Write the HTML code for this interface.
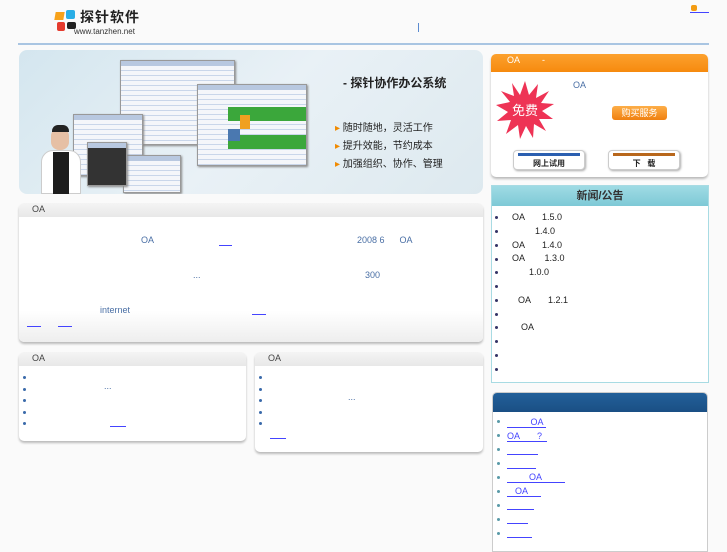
<!DOCTYPE html>
<html><head><meta charset="utf-8"><style>
*{margin:0;padding:0;box-sizing:border-box}
body{width:727px;height:545px;background:#fafafa;position:relative;overflow:hidden;font-family:"Liberation Sans","Noto Sans CJK SC",sans-serif;font-size:9px;color:#333}
.a{position:absolute}
.box{position:absolute;background:#fff;border-radius:5px;box-shadow:0 2px 2px #bbb;overflow:hidden}
.gh{height:14px;background:linear-gradient(#f4f4f4,#e8e8e8);padding:1px 0 0 13px;font-size:9px;color:#444}
.dot{position:absolute;width:3px;height:3px;border-radius:50%;background:#336}
.bl{color:#4a6fa5}
.u{position:absolute;height:1px;background:#44f}
.win{position:absolute;background:repeating-linear-gradient(#f4f6fa 0 4px,#c9d6ea 4px 5px);border:1px solid #999;box-shadow:1px 1px 2px #888}
.win:before{content:"";position:absolute;left:0;right:0;top:0;height:5px;background:#b8c8e0}
</style></head><body>
<div class="a" style="left:55px;top:10px;width:22px;height:22px">
<div class="a" style="left:0;top:2px;width:9px;height:8px;background:#f7a21b;transform:skew(-10deg)"></div>
<div class="a" style="left:11px;top:0;width:9px;height:9px;background:#29aee6;border-radius:2px"></div>
<div class="a" style="left:2px;top:12px;width:8px;height:9px;background:#e53b2e;border-radius:2px"></div>
<div class="a" style="left:12px;top:12px;width:9px;height:7px;background:#222;border-radius:2px"></div>
</div>
<div class="a" style="left:80px;top:8px;font-size:14px;font-weight:bold;color:#222;letter-spacing:1px;line-height:18px">探针软件</div>
<div class="a" style="left:74px;top:27px;font-size:8px;color:#333;line-height:9px">www.tanzhen.net</div>
<div class="a" style="left:418px;top:23px;width:1px;height:9px;background:#5b8bd0"></div>
<div class="a" style="left:691px;top:5px;width:6px;height:6px;background:#f39c12;border-radius:2px"></div>
<div class="a" style="left:690px;top:12px;width:19px;height:1px;background:#44f"></div>
<div class="a" style="left:18px;top:43px;width:691px;height:2px;background:#a9c5e2"></div>

<div class="a" style="left:19px;top:50px;width:464px;height:144px;border-radius:8px;background:linear-gradient(135deg,#d4e6ef,#e9f1f6 50%,#dde9ef);overflow:hidden">
<div class="win" style="left:101px;top:10px;width:115px;height:85px"></div>
<div class="win" style="left:54px;top:64px;width:70px;height:62px"></div>
<div class="win" style="left:178px;top:34px;width:110px;height:82px"><div class="a" style="left:30px;top:22px;width:78px;height:14px;background:#3ba73b"></div><div class="a" style="left:30px;top:50px;width:78px;height:14px;background:#3ba73b"></div><div class="a" style="left:42px;top:30px;width:10px;height:14px;background:#f0a020"></div><div class="a" style="left:30px;top:44px;width:12px;height:12px;background:#4a78b0"></div></div>
<div class="win" style="left:104px;top:105px;width:58px;height:38px"></div>
<div class="win" style="left:68px;top:92px;width:40px;height:44px;background:#333"></div>
<div class="a" style="left:32px;top:78px;width:18px;height:22px;border-radius:8px;background:#e6c0a5"></div>
<div class="a" style="left:33px;top:75px;width:17px;height:7px;border-radius:6px 6px 0 0;background:#222"></div>
<div class="a" style="left:22px;top:100px;width:40px;height:44px;border-radius:12px 12px 0 0;background:#fff;border:1px solid #ccc"></div>
<div class="a" style="left:34px;top:102px;width:16px;height:42px;background:#1c1c1c"></div>
<div class="a" style="left:324px;top:24px;font-size:12px;font-weight:bold;color:#222">- 探针协作办公系统</div>
<div class="a" style="left:316px;top:70px;font-size:10px;color:#222;line-height:18px"><span style="color:#f08a00">▸</span> 随时随地，灵活工作<br><span style="color:#f08a00">▸</span> 提升效能，节约成本<br><span style="color:#f08a00">▸</span> 加强组织、协作、管理</div>
</div>

<div class="box" style="left:491px;top:54px;width:217px;height:123px">
<div style="height:18px;background:linear-gradient(#fca12e,#f68a0e);color:#fff;font-size:9px;padding:1px 0 0 16px">OA &nbsp;&nbsp;&nbsp;&nbsp;&nbsp;&nbsp;&nbsp;&nbsp;-</div>
<div class="a bl" style="left:82px;top:26px;font-size:9px">OA</div>
<svg class="a" style="left:5px;top:27px" width="58" height="58" viewBox="0 0 58 58"><polygon fill="#ee3355" points="29,0 33,14 42,3 40,17 53,10 45,22 58,23 46,30 57,38 43,38 50,50 38,43 37,57 30,45 24,58 22,44 10,53 15,39 1,40 12,31 0,24 14,21 5,10 18,15 16,2 24,14" /><text x="29" y="34" text-anchor="middle" font-size="13" fill="#fff" font-family="Noto Sans CJK SC">免费</text></svg>
<div class="a" style="left:121px;top:52px;width:55px;height:14px;background:linear-gradient(#fdae48,#f08010);border-radius:3px;color:#fff;font-size:9px;text-align:center;line-height:14px">购买服务</div>
<div class="a" style="left:22px;top:96px;width:72px;height:20px;background:#fff;border:1px solid #ccc;border-radius:4px;box-shadow:1px 1px 2px #aaa"><div style="margin:2px 4px;height:3px;background:#2b5fb0"></div><div style="font-size:8px;font-weight:bold;text-align:center;color:#222">网上试用</div></div>
<div class="a" style="left:117px;top:96px;width:72px;height:20px;background:#fff;border:1px solid #ccc;border-radius:4px;box-shadow:1px 1px 2px #aaa"><div style="margin:2px 4px;height:3px;background:#b8671c"></div><div style="font-size:8px;font-weight:bold;text-align:center;color:#222">下 &nbsp;&nbsp;载</div></div>
</div>

<div class="a" style="left:491px;top:185px;width:218px;height:198px;background:#fff;border:1px solid #a8dbe3">
<div style="height:20px;background:linear-gradient(#9fdbe4,#7ec9d6);text-align:center;font-size:11px;font-weight:bold;color:#333;line-height:20px">新闻/公告</div>
<div style="font-size:9px;color:#222;line-height:13.8px;padding:5px 0 0 0;position:relative">
<div style="padding-left:20px">OA &nbsp;&nbsp;&nbsp;&nbsp;&nbsp;&nbsp;1.5.0</div>
<div style="padding-left:43px">1.4.0</div>
<div style="padding-left:20px">OA &nbsp;&nbsp;&nbsp;&nbsp;&nbsp;&nbsp;1.4.0</div>
<div style="padding-left:20px">OA &nbsp;&nbsp;&nbsp;&nbsp;&nbsp;&nbsp;&nbsp;1.3.0</div>
<div style="padding-left:37px">1.0.0</div>
<div>&nbsp;</div>
<div style="padding-left:26px">OA &nbsp;&nbsp;&nbsp;&nbsp;&nbsp;&nbsp;1.2.1</div>
<div>&nbsp;</div>
<div style="padding-left:29px">OA</div>
<div>&nbsp;</div><div>&nbsp;</div><div>&nbsp;</div>
</div></div>
<div class="dot" style="left:495px;top:216px"></div><div class="dot" style="left:495px;top:230px"></div><div class="dot" style="left:495px;top:244px"></div><div class="dot" style="left:495px;top:258px"></div><div class="dot" style="left:495px;top:271px"></div><div class="dot" style="left:495px;top:285px"></div><div class="dot" style="left:495px;top:299px"></div><div class="dot" style="left:495px;top:313px"></div><div class="dot" style="left:495px;top:326px"></div><div class="dot" style="left:495px;top:340px"></div><div class="dot" style="left:495px;top:354px"></div><div class="dot" style="left:495px;top:368px"></div>

<div class="a" style="left:492px;top:392px;width:216px;height:160px;background:#fff;border:1px solid #ccc;border-radius:5px 5px 0 0;overflow:hidden">
<div style="height:19px;background:linear-gradient(#23609a,#1a4f84)"></div>
<div style="position:relative;font-size:9px;color:#44f">
<div class="a" style="left:14px;top:5px;width:39px;border-bottom:1px solid #44f;text-align:right">OA&nbsp;</div>
<div class="a" style="left:14px;top:19px;width:40px;border-bottom:1px solid #44f">OA &nbsp;&nbsp;&nbsp;&nbsp;&nbsp;&nbsp;?</div>
<div class="u" style="left:14px;top:42px;width:31px"></div>
<div class="u" style="left:14px;top:56px;width:29px"></div>
<div class="a" style="left:14px;top:60px;width:58px;border-bottom:1px solid #44f;padding-left:22px">OA</div>
<div class="a" style="left:14px;top:74px;width:34px;border-bottom:1px solid #44f;padding-left:8px">OA</div>
<div class="u" style="left:14px;top:97px;width:27px"></div>
<div class="u" style="left:14px;top:111px;width:21px"></div>
<div class="u" style="left:14px;top:125px;width:25px"></div>
</div></div>
<div class="dot" style="left:497px;top:420px;background:#5a9aa8"></div><div class="dot" style="left:497px;top:434px;background:#5a9aa8"></div><div class="dot" style="left:497px;top:448px;background:#5a9aa8"></div><div class="dot" style="left:497px;top:462px;background:#5a9aa8"></div><div class="dot" style="left:497px;top:476px;background:#5a9aa8"></div><div class="dot" style="left:497px;top:490px;background:#5a9aa8"></div><div class="dot" style="left:497px;top:504px;background:#5a9aa8"></div><div class="dot" style="left:497px;top:518px;background:#5a9aa8"></div><div class="dot" style="left:497px;top:532px;background:#5a9aa8"></div>

<div class="box" style="left:19px;top:203px;width:464px;height:139px">
<div class="gh">OA</div>
<div style="height:125px;background:linear-gradient(#fff 75%,#eee)"></div>
<div class="a bl" style="left:122px;top:32px">OA</div>
<div class="u" style="left:200px;top:42px;width:13px"></div>
<div class="a bl" style="left:338px;top:32px">2008 6 &nbsp;&nbsp;&nbsp;&nbsp;&nbsp;OA</div>
<div class="a bl" style="left:174px;top:67px">...</div>
<div class="a bl" style="left:346px;top:67px">300</div>
<div class="a bl" style="left:81px;top:102px">internet</div>
<div class="u" style="left:233px;top:111px;width:14px"></div>
<div class="u" style="left:8px;top:123px;width:14px"></div>
<div class="u" style="left:39px;top:123px;width:14px"></div>
</div>

<div class="box" style="left:19px;top:352px;width:227px;height:89px">
<div class="gh">OA</div>
<div class="a bl" style="left:85px;top:29px">...</div>
<div class="u" style="left:91px;top:74px;width:16px"></div>
</div>
<div class="box" style="left:255px;top:352px;width:228px;height:100px">
<div class="gh">OA</div>
<div class="a bl" style="left:93px;top:40px">...</div>
<div class="u" style="left:15px;top:86px;width:16px"></div>
</div>
<div class="dot" style="left:23px;top:376px;background:#3a6aaa"></div><div class="dot" style="left:23px;top:388px;background:#3a6aaa"></div><div class="dot" style="left:23px;top:399px;background:#3a6aaa"></div><div class="dot" style="left:23px;top:411px;background:#3a6aaa"></div><div class="dot" style="left:23px;top:422px;background:#3a6aaa"></div>
<div class="dot" style="left:259px;top:376px;background:#3a6aaa"></div><div class="dot" style="left:259px;top:388px;background:#3a6aaa"></div><div class="dot" style="left:259px;top:399px;background:#3a6aaa"></div><div class="dot" style="left:259px;top:411px;background:#3a6aaa"></div><div class="dot" style="left:259px;top:422px;background:#3a6aaa"></div>
</body></html>
